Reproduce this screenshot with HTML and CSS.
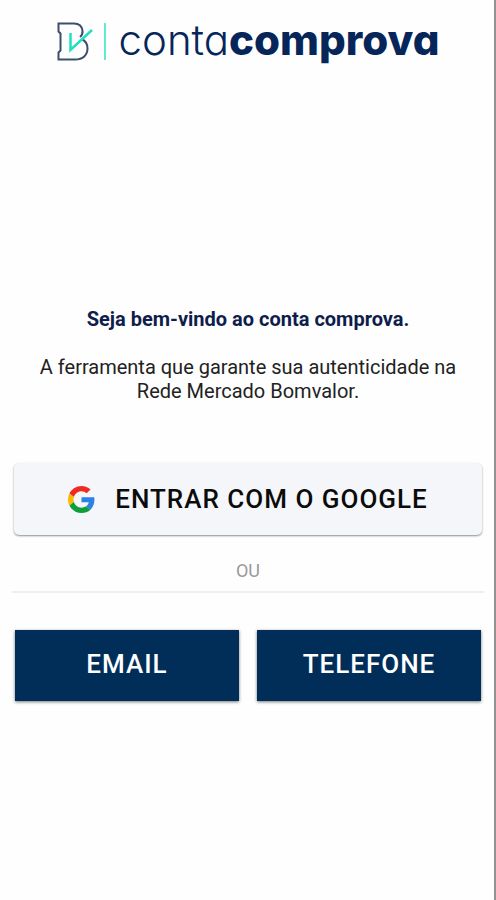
FILE: index.html
```html
<!DOCTYPE html>
<html lang="pt-BR">
<head>
  <meta charset="utf-8">
  <meta name="viewport" content="width=device-width, initial-scale=1">
  <title>Conta Comprova</title>
  <link rel="stylesheet" href="styles.css">
</head>
<body>
  <main class="screen">
    <header class="brand">
      <svg class="brand-mark" viewBox="0 0 50 42" aria-hidden="true">
        <path class="mark-letter" d="M23 16Q26 13.500 25.500 9.500Q24.500 2.500 17 2.500H1.500V10.500L3.500 12.500V29.500L1.500 31.500V38.500H18C26 38.500 30.500 34 30.500 27.500C30.500 22.500 28 19.500 24.500 18"/>
        <path class="mark-check" d="M13.500 12V29L35 9"/>
        <path class="mark-bar" d="M48 2V39"/>
      </svg>
      <h1 class="brand-name">conta<strong>comprova</strong></h1>
    </header>

    <section class="intro">
      <h2 class="welcome">Seja bem-vindo ao conta comprova.</h2>
      <p class="description">A ferramenta que garante sua autenticidade na Rede Mercado Bomvalor.</p>
    </section>

    <button class="button button-google" type="button">
      <svg class="google-icon" viewBox="0 0 48 48" aria-hidden="true">
        <path fill="#F02A20" d="M24 0C14.620 0 6.510 5.380 2.560 13.220l7.980 6.190C12.430 13.720 17.740 9.500 24 9.500c3.540 0 6.710 1.220 9.210 3.600l6.850-6.850C35.900 2.380 30.470 0 24 0z"/>
        <path fill="#2F7FE8" d="M46.980 24.550c0-1.570-.15-3.090-.38-4.550H24v9.020h12.940c-.58 2.960-2.260 5.480-4.780 7.180l7.730 6c4.510-4.180 7.090-10.360 7.090-17.650z"/>
        <path fill="#FBB805" d="M10.530 28.590c-.48-1.450-.76-2.990-.76-4.590s.27-3.140.76-4.590l-7.980-6.190C.92 16.460 0 20.120 0 24s.92 7.540 2.560 10.780l7.970-6.190z"/>
        <path fill="#0E9F3C" d="M24 48c6.480 0 11.930-2.130 15.890-5.810l-7.730-6c-2.150 1.450-4.920 2.300-8.160 2.300-6.260 0-11.570-4.220-13.470-9.910l-7.980 6.190C6.510 42.620 14.620 48 24 48z"/>
      </svg>
      <span>ENTRAR COM O GOOGLE</span>
    </button>

    <p class="divider">OU</p>

    <div class="options">
      <button class="button button-primary" type="button">EMAIL</button>
      <button class="button button-primary" type="button">TELEFONE</button>
    </div>
  </main>
</body>
</html>
```
FILE: styles.css
```css
* {
  box-sizing: border-box;
}

body {
  margin: 0;
  background: #fefefe;
  font-family: Roboto, "Liberation Sans", sans-serif;
}

h1,
h2,
p {
  margin: 0;
}

.screen {
  min-height: 100vh;
  padding: 16px 10px 16px 12px;
  border-right: 2px solid #929292;
}

.brand {
  display: flex;
  align-items: center;
  justify-content: center;
  gap: 12px;
  height: 52px;
}

.brand-mark {
  flex: none;
  width: 50px;
  height: 42px;
  fill: none;
}

.mark-letter {
  stroke: #3c4e6c;
  stroke-width: 2;
}

.mark-check {
  stroke: #1fe0c0;
  stroke-width: 2.5;
}

.mark-bar {
  stroke: #63e8d2;
  stroke-width: 2;
}

.brand-name {
  color: #06265a;
  font-family: Inter, sans-serif;
  font-size: 42px;
  font-weight: 300;
  font-feature-settings: "cv11";
  line-height: 48px;
  padding-bottom: 4px;
}

.brand-name strong {
  font-weight: 800;
}

.intro {
  margin-top: 239px;
  text-align: center;
}

.welcome {
  color: #0f1d4d;
  font-size: 20px;
  font-weight: 700;
  line-height: 24px;
}

.description {
  margin-top: 24px;
  padding: 0 16px;
  color: #222;
  font-size: 20px;
  line-height: 24px;
}

.button {
  display: flex;
  align-items: center;
  justify-content: center;
  border: 0;
  font-family: inherit;
  font-size: 26px;
  font-weight: 500;
  letter-spacing: 1px;
}

.button-google {
  gap: 20px;
  width: calc(100% - 4px);
  height: 72px;
  margin: 60px 2px 0;
  border-radius: 5px;
  background: #f4f6fa;
  color: #0b0b0b;
  box-shadow: 0 1px 2px #8b9090;
}

.google-icon {
  width: 27px;
  height: 27px;
}

.divider {
  margin-top: 24px;
  padding-bottom: 8px;
  border-bottom: 2px solid #eee;
  color: #999;
  font-size: 18px;
  line-height: 24px;
  text-align: center;
}

.options {
  display: grid;
  grid-template-columns: 1fr 1fr;
  gap: 18px;
  margin-top: 37px;
  padding: 0 3px;
}

.button-primary {
  height: 71px;
  padding-bottom: 4px;
  background: #002e59;
  color: #fff;
  box-shadow: 0 1px 3px #777;
}
```
